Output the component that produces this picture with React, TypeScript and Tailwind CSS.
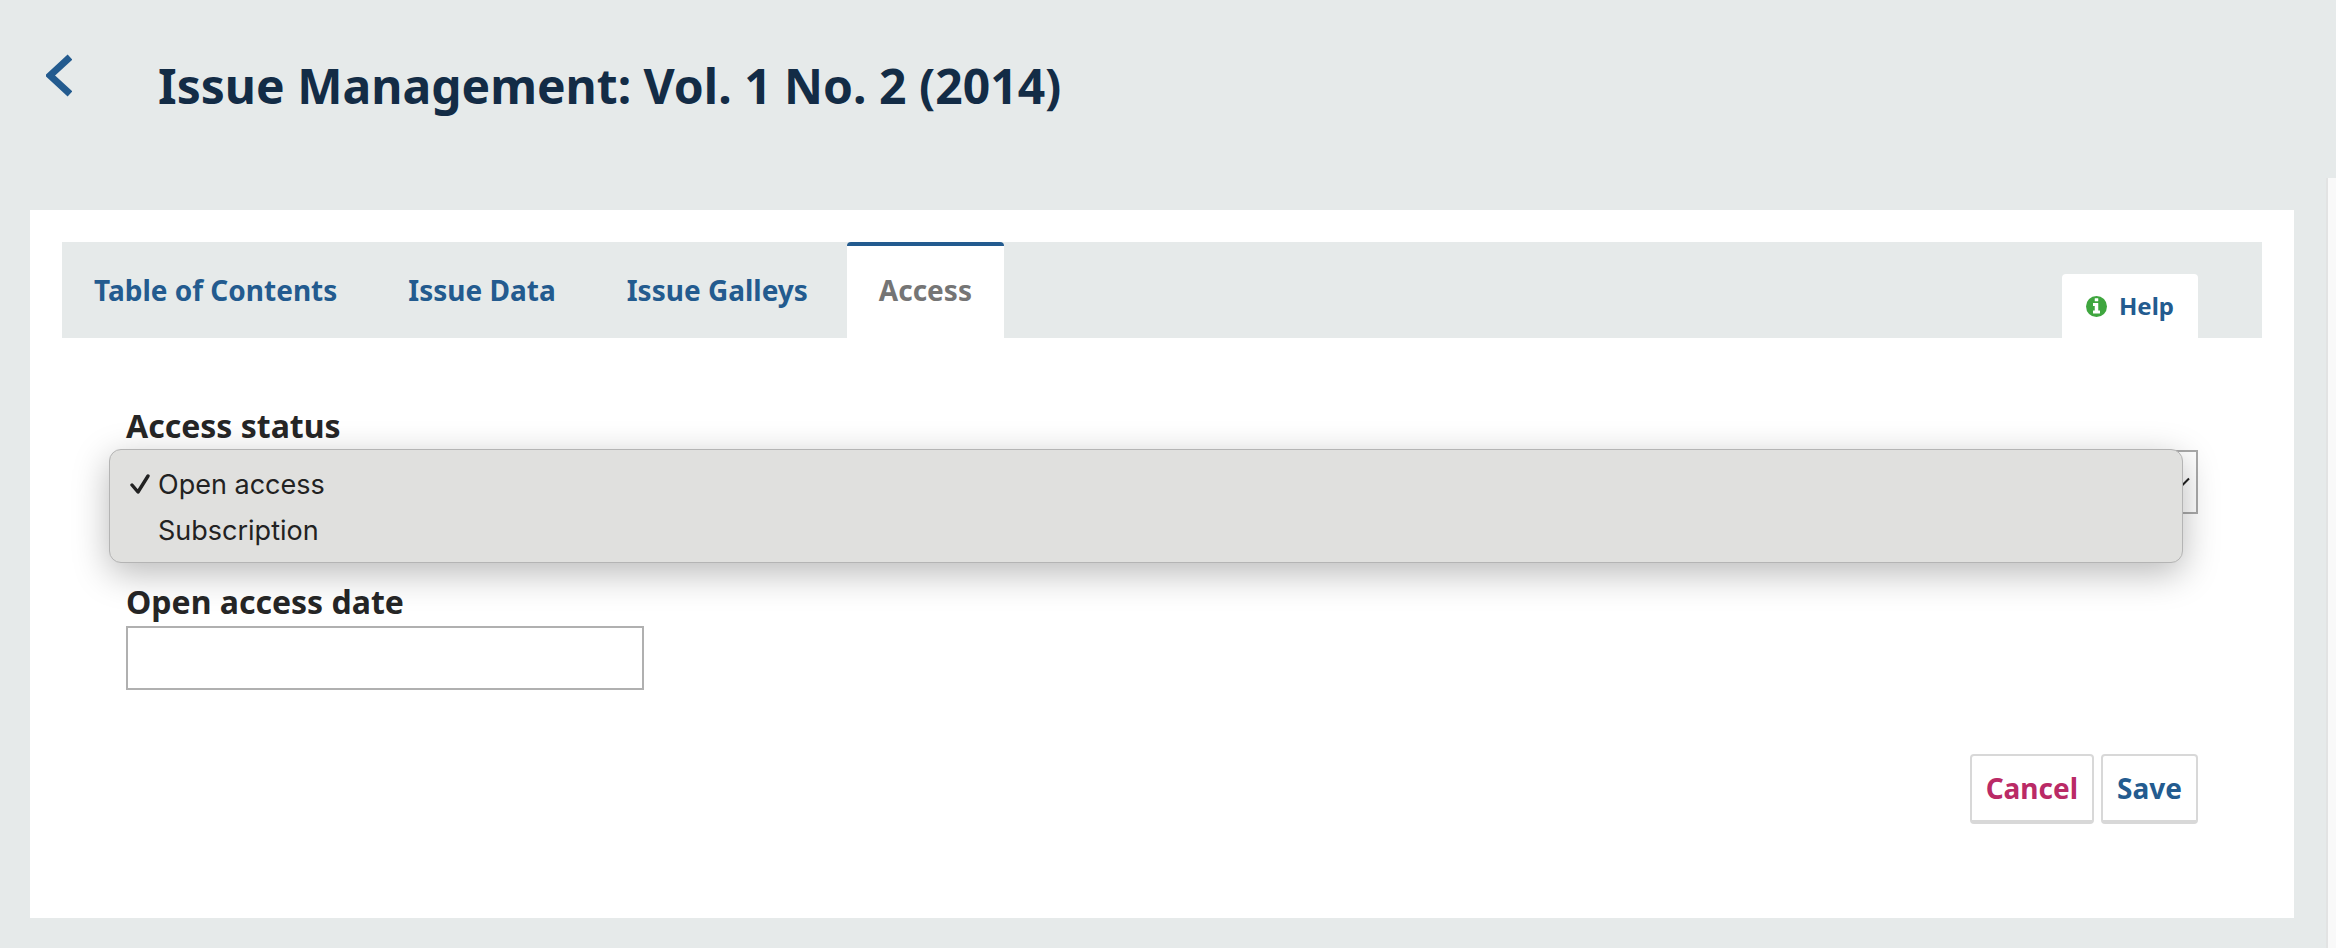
import React, { useState } from "react";

const tabs = ["Table of Contents", "Issue Data", "Issue Galleys", "Access"];
const statuses = ["Open access", "Subscription"];

function BackLink() {
  return (
    <a href="#issues" aria-label="Back to issues" className="mt-[54px] block">
      <svg width="26" height="43" viewBox="0 0 26 43" className="block">
        <path d="M24 3 L4 21.5 L24 40" fill="none" stroke="#235b8f" strokeWidth="7" />
      </svg>
    </a>
  );
}

function HelpLink() {
  return (
    <a
      href="#help"
      className="flex h-16 items-center gap-3 rounded-t bg-white px-6 text-2xl font-bold text-[#235b8f]"
    >
      <svg width="21" height="21" viewBox="0 0 1536 1536" aria-hidden="true">
        <circle cx="768" cy="768" r="768" fill="#3fa63f" />
        <path
          fill="#fff"
          d="M1024 1248v-160q0-14-9-23t-23-9h-96V544q0-14-9-23t-23-9H544q-14 0-23 9t-9 23v160q0 14 9 23t23 9h96v320h-96q-14 0-23 9t-9 23v160q0 14 9 23t23 9h448q14 0 23-9t9-23zM896 352V192q0-14-9-23t-23-9H672q-14 0-23 9t-9 23v160q0 14 9 23t23 9h192q14 0 23-9t9-23z"
        />
      </svg>
      Help
    </a>
  );
}

export default function App() {
  const [active, setActive] = useState("Access");
  const [status, setStatus] = useState("Open access");

  return (
    <div className="flex min-h-screen bg-[#e6eaea] font-['Noto_Sans',sans-serif] text-[#262626]">
      <main className="min-w-0 flex-1 pb-[30px] pl-[30px] pr-8">
        <header className="flex h-[210px] gap-[86px] pl-4">
          <BackLink />
          <h1 className="mt-[54px] text-5xl leading-16 font-bold text-[#132c46]">
            Issue Management: Vol. 1 No. 2 (2014)
          </h1>
        </header>

        <section className="bg-white px-8 pt-8 pb-[94px]">
          <div className="flex h-24 items-end justify-between bg-[#e6eaea] pr-16">
            <nav className="flex h-full gap-[7px]">
              {tabs.map((tab) => (
                <button
                  key={tab}
                  type="button"
                  onClick={() => setActive(tab)}
                  className={
                    tab === active
                      ? "h-full rounded-t border-t-4 border-white border-t-[#235b8f] bg-white px-8 pb-1 text-[28px] font-bold text-[#757575]"
                      : "h-full px-8 text-[28px] font-bold text-[#235b8f]"
                  }
                >
                  {tab}
                </button>
              ))}
            </nav>
            <HelpLink />
          </div>

          <form className="px-16 pt-[68px]" onSubmit={(e) => e.preventDefault()}>
            <label htmlFor="status" className="mb-1 block text-[32px] leading-10 font-bold">
              Access status
            </label>
            <div className="relative">
              <select
                id="status"
                value={status}
                onChange={(e) => setStatus(e.target.value)}
                className="block h-16 w-full appearance-none border-2 border-[#aaa] bg-white px-4 text-[28px]"
              >
                {statuses.map((s) => (
                  <option key={s}>{s}</option>
                ))}
              </select>
              <svg
                width="20"
                height="12"
                viewBox="0 0 20 12"
                aria-hidden="true"
                className="absolute top-[27px] right-[7px]"
              >
                <path d="M2 1.5 L10 9.5 L18 1.5" fill="none" stroke="#222" strokeWidth="2" />
              </svg>
              <ul
                role="listbox"
                aria-label="Access status"
                className="absolute -top-px right-[15px] -left-[17px] rounded-[12px] border border-[#b4b4b4] bg-[#e0e0de] pt-3 pb-2 font-[Inter,sans-serif] text-[27px] leading-[46px] text-[#222] shadow-[0_10px_36px_rgba(0,0,0,0.28)]"
              >
                {statuses.map((s) => (
                  <li
                    key={s}
                    role="option"
                    aria-selected={s === status}
                    onClick={() => setStatus(s)}
                    className="flex items-center gap-2 pl-5"
                  >
                    <svg width="20" height="22" viewBox="0 0 20 22" aria-hidden="true">
                      {s === status && (
                        <path
                          d="M2 11 L8 18 L18 2"
                          fill="none"
                          stroke="#222"
                          strokeWidth="3.4"
                          strokeLinecap="round"
                          strokeLinejoin="round"
                        />
                      )}
                    </svg>
                    {s}
                  </li>
                ))}
              </ul>
            </div>

            <label htmlFor="date" className="mt-[68px] mb-1 block text-[32px] leading-10 font-bold">
              Open access date
            </label>
            <input
              id="date"
              type="text"
              className="block h-16 w-1/4 border-2 border-[#b0b0b0] bg-white px-4 text-[28px]"
            />

            <div className="mt-16 flex justify-end gap-[7px] text-[28px] font-bold">
              <button
                type="button"
                className="h-[70px] rounded border-2 border-b-4 border-[#d8d8d8] bg-white px-[14px] text-[#ba2a66]"
              >
                Cancel
              </button>
              <button
                type="submit"
                className="h-[70px] rounded border-2 border-b-4 border-[#d8d8d8] bg-white px-[14px] text-[#235b8f]"
              >
                Save
              </button>
            </div>
          </form>
        </section>
      </main>
      <div className="mt-[178px] w-[10px] border-l-2 border-[#e2e3e3] bg-[#f9f9f9]" />
    </div>
  );
}
